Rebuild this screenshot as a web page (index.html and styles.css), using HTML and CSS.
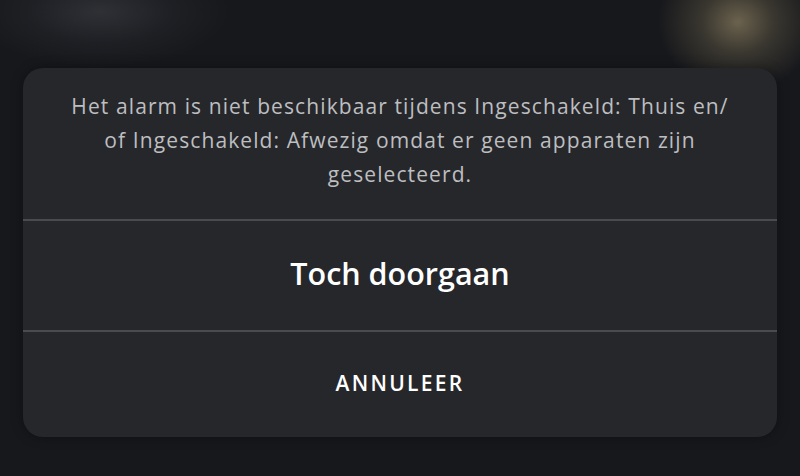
FILE: index.html
```html
<!DOCTYPE html>
<html lang="nl">
<head>
<meta charset="utf-8">
<link rel="stylesheet" href="styles.css">
</head>
<body>
<div class="screen">
  <div class="dialog">
    <p class="message">Het alarm is niet beschikbaar tijdens Ingeschakeld: Thuis en/ of Ingeschakeld: Afwezig omdat er geen apparaten zijn geselecteerd.</p>
    <button class="action primary">Toch doorgaan</button>
    <button class="action cancel">ANNULEER</button>
  </div>
</div>
</body>
</html>
```
FILE: styles.css
```css
html, body {
  margin: 0;
  padding: 0;
  width: 800px;
  height: 476px;
  overflow: hidden;
}
body {
  font-family: "Open Sans", "Noto Sans", sans-serif;
  background:
    radial-gradient(ellipse 80px 70px at 738px 22px, rgba(112,102,80,0.95), rgba(86,80,64,0.55) 45%, rgba(30,30,32,0) 100%),
    radial-gradient(ellipse 130px 55px at 100px 12px, rgba(50,51,56,0.9), rgba(40,41,46,0.45) 55%, rgba(24,25,29,0) 100%),
    #17181c;
}
.screen {
  display: flex;
  justify-content: center;
  padding-top: 68px;
}
.dialog {
  width: 754px;
  height: 369px;
  background: #26272b;
  border-radius: 20px;
  display: flex;
  flex-direction: column;
  overflow: hidden;
  box-shadow: 0 0 12px rgba(0,0,0,0.35);
}
.message {
  margin: 0;
  height: 153px;
  box-sizing: border-box;
  padding: 21px 43px 0;
  text-align: center;
  color: #bdbec0;
  font-size: 21px;
  letter-spacing: 1.1px;
  line-height: 34px;
  border-bottom: 2px solid #4a4b4f;
}
.action {
  appearance: none;
  border: 0;
  background: transparent;
  color: #ffffff;
  font-family: inherit;
  font-weight: 600;
  display: flex;
  align-items: center;
  justify-content: center;
  padding: 0;
}
.primary {
  height: 111px;
  font-size: 30.5px;
  padding-bottom: 5px;
  border-bottom: 2px solid #4a4b4f;
}
.cancel {
  flex: 1;
  font-size: 21px;
  letter-spacing: 2.3px;
  padding-bottom: 4px;
}
```
